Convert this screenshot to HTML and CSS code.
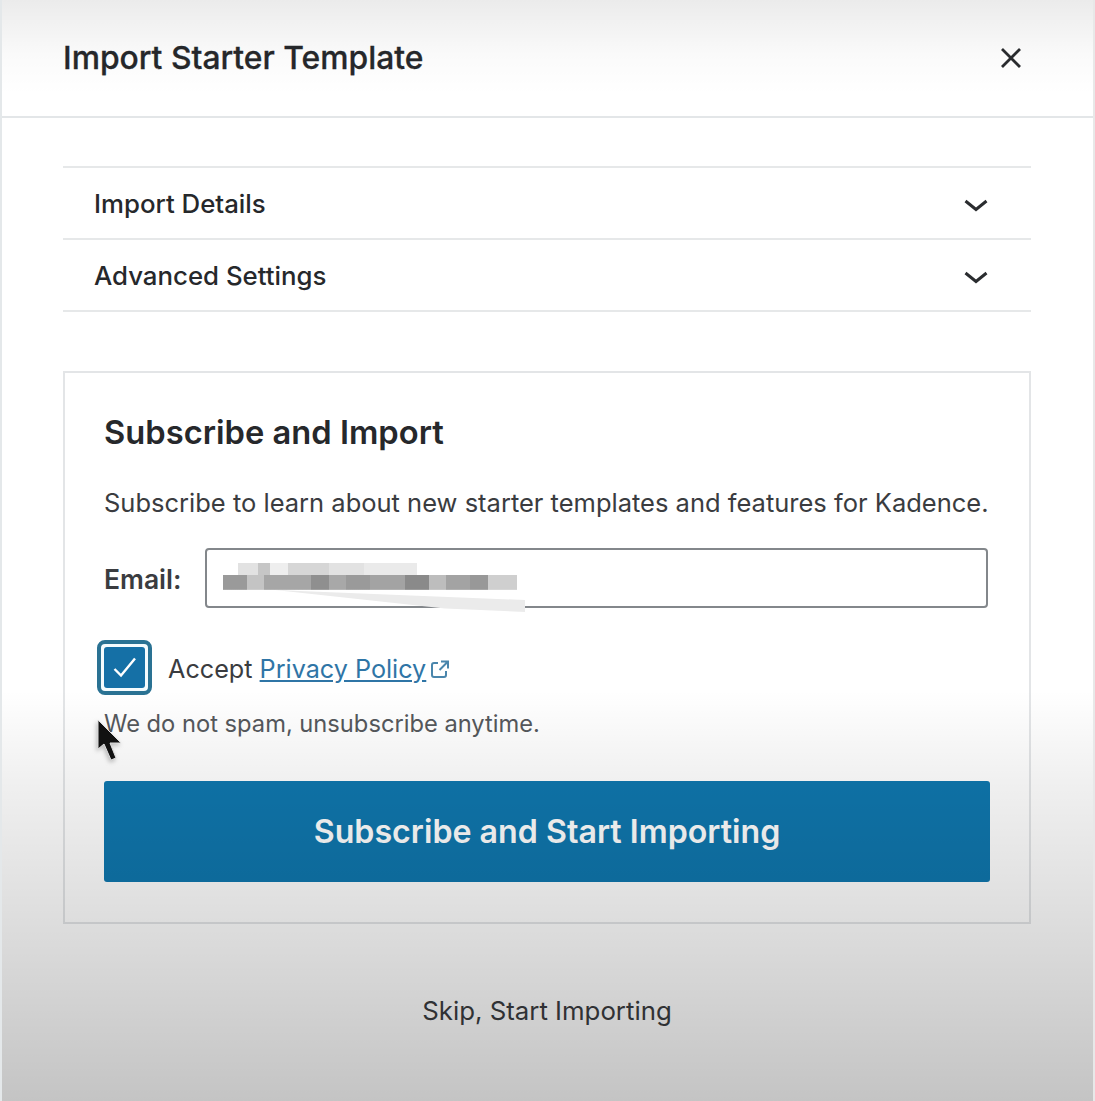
FILE: index.html
```html
<!DOCTYPE html>
<html lang="en">
<head>
<meta charset="UTF-8">
<meta name="viewport" content="width=device-width, initial-scale=1.0">
<title>Import Starter Template</title>
<link rel="stylesheet" href="styles.css">
</head>
<body>

<div id="modal">
  <div class="modal-header">
    <h1 class="modal-title">Import Starter Template</h1>
    <svg class="close-icon" width="24" height="24" viewBox="0 0 24 24"><path d="M3 3 L21 21 M21 3 L3 21" fill="none" stroke="#2a2c2f" stroke-width="2.8"/></svg>
  </div>

  <div class="modal-body">
    <div class="accordion">
      <div class="accordion-row">
        <span>Import Details</span>
        <svg class="chevron" width="24" height="24" viewBox="0 0 24 24"><path d="M1.5 9 L12 17.5 L22.5 9" fill="none" stroke="#2a2c2f" stroke-width="3"/></svg>
      </div>
      <div class="accordion-row">
        <span>Advanced Settings</span>
        <svg class="chevron" width="24" height="24" viewBox="0 0 24 24"><path d="M1.5 9 L12 17.5 L22.5 9" fill="none" stroke="#2a2c2f" stroke-width="3"/></svg>
      </div>
    </div>

    <div class="subscribe-box">
      <h2 class="subscribe-title">Subscribe and Import</h2>
      <p class="subscribe-text">Subscribe to learn about new starter templates and features for Kadence.</p>

      <div class="email-row">
        <label class="email-label" for="email">Email:</label>
        <div class="email-field">
          <input type="text" id="email" class="email-input" />
          <div class="email-smear"></div>
          <div class="email-blur"></div>
        </div>
      </div>

      <div class="accept-row">
        <div class="checkbox">
          <div class="checkbox-inner">
            <svg width="26" height="26" viewBox="0 0 26 26"><path d="M2.5 14 L9 20.5 L23 3.5" fill="none" stroke="#fff" stroke-width="2.4"/></svg>
          </div>
        </div>
        <span class="accept-text">Accept <a href="#" class="policy-link">Privacy Policy</a></span>
        <svg class="external-icon" width="20" height="20" viewBox="0 0 20 20"><path d="M8 4 H4 Q2 4 2 6 V16 Q2 18 4 18 H14 Q16 18 16 16 V12 M11 2.5 H18 V9.5 M18 2.5 L9.5 11" fill="none" stroke="#4a86ac" stroke-width="2"/></svg>
      </div>

      <div class="spam-note">We do not spam, unsubscribe anytime.</div>
      <button class="subscribe-button">Subscribe and Start Importing</button>
    </div>

    <div class="skip-link">Skip, Start Importing</div>
  </div>

  <div class="shade"></div>
  <svg class="cursor" width="30" height="50" viewBox="0 0 30 50"><path d="M2 4 L2 33 L8 28 L15 44 L20 42 L14 27 L25 27 Z" fill="#111" stroke="#ddd" stroke-width="1"/></svg>
</div>

</body>
</html>
```

FILE: styles.css
```css
* {
  box-sizing: border-box;
}
html, body {
  margin: 0;
  padding: 0;
}
body {
  font-family: Inter, "Noto Sans", sans-serif;
  color: #26282b;
  background-color: #fff;
}
#modal {
  position: relative;
  width: 1095px;
  height: 1101px;
  overflow: hidden;
  background-color: #fff;
  border-left: 2px solid #e4e8ea;
  border-right: 2px solid #e8e8e8;
}
.modal-header {
  height: 118px;
  display: flex;
  justify-content: space-between;
  align-items: center;
  padding: 0 70px 0 61px;
  border-bottom: 2px solid #e3e6e8;
}
.modal-title {
  margin: 0 0 2px;
  font-size: 31.8px;
  font-weight: 500;
  -webkit-text-stroke: 0.3px #26282b;
}
.modal-body {
  padding: 48px 62px 0 61px;
}
.accordion {
  border-top: 2px solid #e6e8e9;
}
.accordion-row {
  height: 72px;
  display: flex;
  justify-content: space-between;
  align-items: center;
  padding: 0 43px 0 31px;
  border-bottom: 2px solid #e6e8e9;
  font-size: 25.8px;
  font-weight: 500;
}
.chevron {
  margin-top: 2px;
}
.subscribe-box {
  height: 553px;
  margin-top: 59px;
  padding: 36px 39px 0;
  border: 2px solid #e3e5e7;
}
.subscribe-title {
  margin: 0;
  font-size: 32.7px;
  line-height: 46px;
  font-weight: 600;
}
.subscribe-text {
  margin: 31px 0 0;
  font-size: 25.5px;
  line-height: 34px;
  color: #3a3c40;
  white-space: nowrap;
}
.email-row {
  display: flex;
  align-items: center;
  margin-top: 28px;
}
.email-label {
  width: 101px;
  padding-top: 1px;
  font-size: 26.5px;
  font-weight: 600;
  color: #3a3c40;
}
.email-field {
  position: relative;
  width: 783px;
  height: 60px;
}
.email-input {
  width: 100%;
  height: 100%;
  border: 2px solid #83878b;
  border-radius: 4px;
  background-color: #fff;
}
.email-smear {
  position: absolute;
  left: 70px;
  top: 40px;
  width: 250px;
  height: 24px;
  background-color: #ebebeb;
  clip-path: polygon(0 8%, 100% 50%, 100% 100%, 68% 85%);
}
.email-blur {
  position: absolute;
  left: 18px;
  top: 15px;
  width: 294px;
  height: 27px;
  filter: blur(0.6px);
  background-repeat: no-repeat;
  background-position: top, bottom;
  background-size: 100% 45%, 100% 55%;
  background-image:
    linear-gradient(90deg, #fff 0 5%, #e2e2e2 5% 12%, #c6c6c6 12% 16%, #eee 16% 22%, #d6d6d6 22% 36%, #e2e2e2 36% 48%, #eaeaea 48% 66%, #fff 66% 100%),
    linear-gradient(90deg, #9a9a9a 0 8%, #c4c4c4 8% 14%, #a6a6a6 14% 30%, #8f8f8f 30% 36%, #a8a8a8 36% 42%, #9a9a9a 42% 50%, #a3a3a3 50% 62%, #8a8a8a 62% 70%, #bdbdbd 70% 76%, #a3a3a3 76% 84%, #989898 84% 90%, #cfcfcf 90% 100%);
}
.accept-row {
  display: flex;
  align-items: center;
  margin-top: 32px;
  margin-left: -7px;
}
.checkbox {
  width: 55px;
  height: 55px;
  padding: 3px;
  border-radius: 8px;
  border: 4px solid #2a7293;
  background-color: #f4fbfd;
}
.checkbox-inner {
  width: 100%;
  height: 100%;
  display: flex;
  justify-content: center;
  align-items: center;
  border-radius: 3px;
  background-color: #1570a6;
}
.accept-text {
  margin-left: 16px;
  padding-top: 3px;
  font-size: 25.2px;
  color: #3a3c40;
}
.policy-link {
  color: #2f75a6;
}
.external-icon {
  margin: 3px 0 0 4px;
}
.spam-note {
  margin-top: 13px;
  font-size: 23.7px;
  line-height: 32px;
  color: #55585c;
}
.subscribe-button {
  display: block;
  width: 886px;
  height: 101px;
  margin-top: 41px;
  border: none;
  border-radius: 3px;
  background-color: #0f77ae;
  color: #fff;
  font-family: inherit;
  font-size: 32.2px;
  font-weight: 600;
}
.skip-link {
  margin-top: 69px;
  text-align: center;
  font-size: 25.8px;
  line-height: 36px;
  color: #3a3c40;
}
.shade {
  position: absolute;
  left: -2px;
  top: 0;
  width: 1095px;
  height: 1101px;
  pointer-events: none;
  background: linear-gradient(180deg, rgba(0,0,0,0.08) 0, rgba(0,0,0,0.02) 55px, rgba(0,0,0,0) 95px, rgba(0,0,0,0) 690px, rgba(0,0,0,0.06) 780px, rgba(0,0,0,0.12) 900px, rgba(0,0,0,0.23) 1101px);
}
.cursor {
  position: absolute;
  left: 94px;
  top: 716px;
  filter: drop-shadow(-1px 2px 2px rgba(0,0,0,0.25));
}
```
